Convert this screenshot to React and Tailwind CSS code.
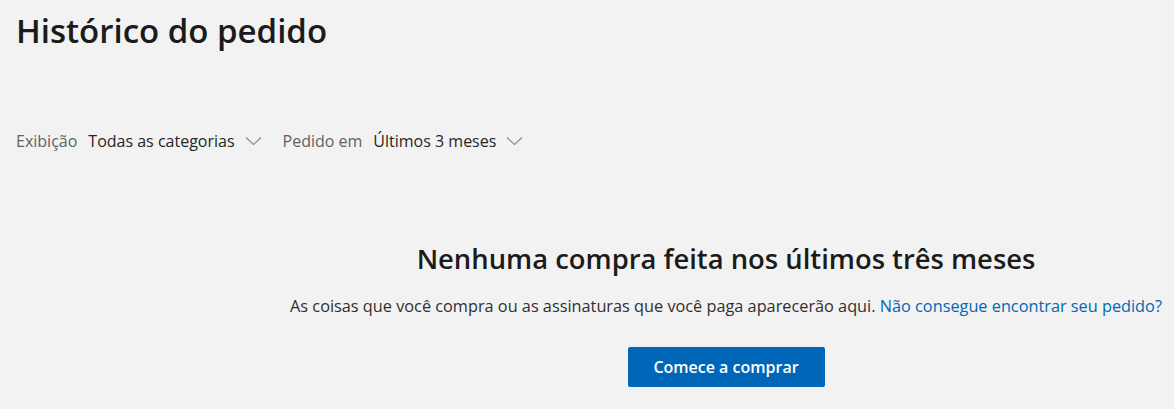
// Order history page – empty state
function Chevron() {
  return (
    <svg width="17" height="10" viewBox="0 0 17 10" fill="none" className="ml-[10px]">
      <path d="M1 1.5 L8.5 8.5 L16 1.5" stroke="#8a8a8a" strokeWidth="1.1" />
    </svg>
  )
}

function Filter({ label, value }) {
  return (
    <div className="flex items-center">
      <span className="text-[#616161]">{label}</span>
      <button className="ml-[11px] flex items-center text-[#262626]">
        {value}
        <Chevron />
      </button>
    </div>
  )
}

export default function App() {
  return (
    <div
      className="min-h-[409px] w-full bg-[#f2f2f2] text-[#1a1a1a]"
      style={{ fontFamily: '"Open Sans", "Noto Sans", sans-serif' }}
    >
      <h1 className="pl-4 pt-[9px] text-[33px] font-semibold leading-[44px] text-[#1b1b1b]">
        Histórico do pedido
      </h1>

      <div className="mt-[77px] flex items-center gap-[21px] pl-4 text-[16px] leading-[22px]">
        <Filter label="Exibição" value="Todas as categorias" />
        <Filter label="Pedido em" value="Últimos 3 meses" />
      </div>

      <div className="mt-[89px] flex flex-col items-center pl-[278px]">
        <h2 className="text-[27.4px] font-semibold leading-[36px] text-[#1b1b1b]">
          Nenhuma compra feita nos últimos três meses
        </h2>
        <p className="mt-[18px] whitespace-nowrap text-[16.3px] leading-[22px] text-[#2f2f2f]">
          As coisas que você compra ou as assinaturas que você paga aparecerão aqui.{' '}
          <a href="#" className="text-[#0067b8]">Não consegue encontrar seu pedido?</a>
        </p>
        <button className="mt-[30px] h-[40px] w-[197px] rounded-[2px] bg-[#0067b8] text-[16px] font-semibold text-white">
          Comece a comprar
        </button>
      </div>
    </div>
  )
}
